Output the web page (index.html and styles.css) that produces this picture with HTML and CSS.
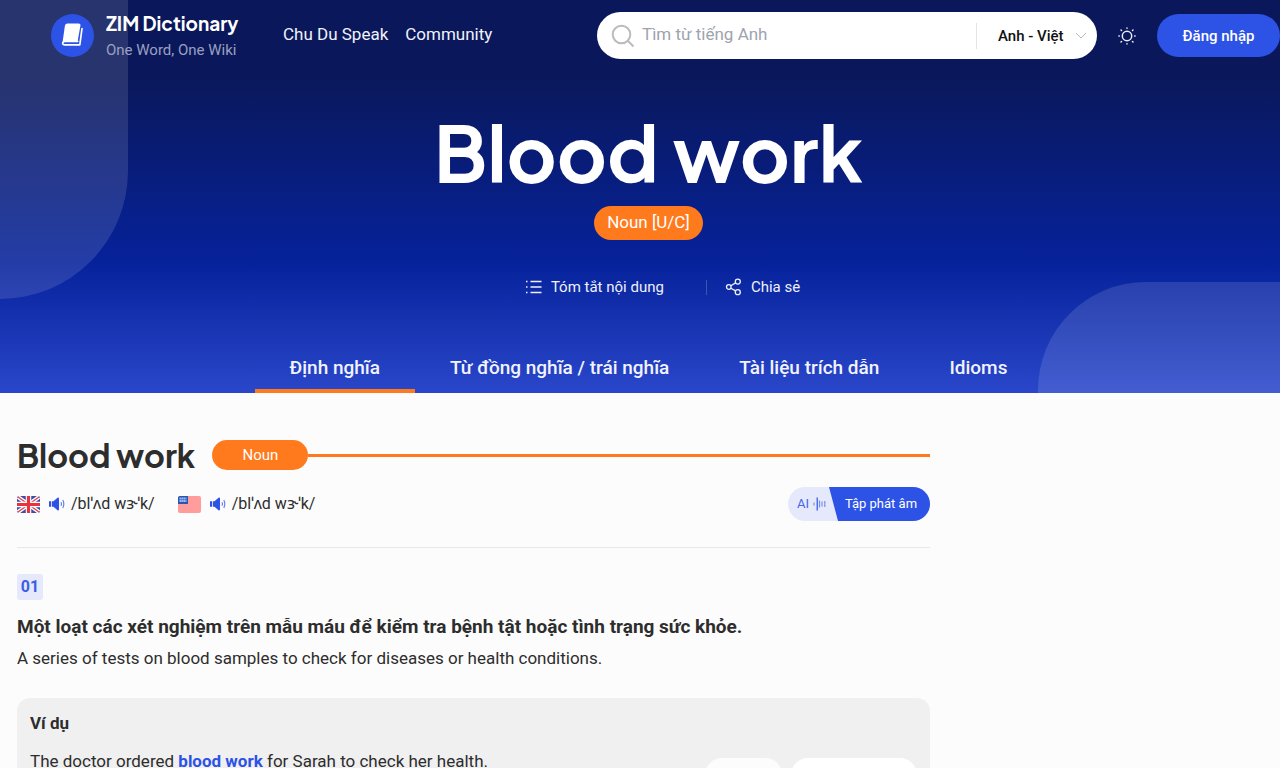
FILE: index.html
```html
<!DOCTYPE html>
<html lang="vi">
<head>
<meta charset="utf-8">
<meta name="viewport" content="width=device-width, initial-scale=1">
<title>Blood work - ZIM Dictionary</title>
<link rel="stylesheet" href="styles.css">
</head>
<body>
<div class="hero">
  <div class="blob blob-left"></div>
  <div class="blob blob-right"></div>
  <header class="topbar">
    <a class="brand" href="#">
      <svg class="brand-mark" viewBox="0 0 43 43" aria-hidden="true">
        <circle cx="21.5" cy="21.5" r="21.5" fill="#2d52e6"/>
        <path d="M16.500 9.500h11q2.300 0 1.900 2.300L26.700 27H14.500q-1.800 0-2.900 1l2.300-16.200q.4-2.300 2.600-2.300z" fill="#fff"/>
        <path d="M31 14.500l-2.200 16.300H14q-2.500 0-2.300-1.800.2-1.700 2.800-1.700h12.200" fill="none" stroke="#fff" stroke-width="1.700" stroke-linecap="round" stroke-linejoin="round"/>
      </svg>
      <span class="brand-text"><span class="brand-name">ZIM Dictionary</span><span class="brand-tag">One Word, One Wiki</span></span>
    </a>
    <nav class="nav"><a href="#">Chu Du Speak</a><a href="#">Community</a></nav>
    <form class="search">
      <svg class="search-icon" viewBox="0 0 24 24" aria-hidden="true"><circle cx="10.500" cy="10.500" r="8.800"/><path d="M17 17l5.500 5.500"/></svg>
      <input class="search-input" type="text" placeholder="Tìm từ tiếng Anh" aria-label="Tìm từ tiếng Anh">
      <span class="lang">
        <select class="lang-select" aria-label="Ngôn ngữ"><option>Anh - Việt</option></select>
        <svg class="chevron" viewBox="0 0 12 8" aria-hidden="true"><path d="M1 1l5 5 5-5"/></svg>
      </span>
    </form>
    <button class="theme" type="button" aria-label="Giao diện">
      <svg viewBox="0 0 18 18" aria-hidden="true"><circle cx="9" cy="9" r="4.700"/><path d="M9 .9v.4M9 16.700v.4M.9 9h.4M16.700 9h.4M3 3l.5.5M14.500 14.500l.5.500M3 15l.5-.5M14.500 3.500l.5-.5"/></svg>
    </button>
    <button class="login" type="button">Đăng nhập</button>
  </header>
  <div class="hero-body">
    <h1 class="hero-title">Blood work</h1>
    <span class="hero-pos">Noun [U/C]</span>
    <div class="actions">
      <button class="action" type="button">
        <svg viewBox="0 0 18 18" aria-hidden="true"><path d="M5.500 3.500h11M5.500 9h11M5.500 14.500h11M1 3.500h1.500M1 9h1.500M1 14.500h1.500"/></svg>Tóm tắt nội dung</button>
      <span class="divider"></span>
      <button class="action" type="button">
        <svg viewBox="0 0 18 18" aria-hidden="true"><circle cx="3.800" cy="9" r="2.300"/><circle cx="12.800" cy="3.600" r="2.500"/><circle cx="12.800" cy="14.200" r="2.500"/><path d="M5.800 7.800l4.800-2.900M5.800 10.200l4.900 2.700"/></svg>Chia sẻ</button>
    </div>
    <nav class="tabs">
      <a class="tab tab-active" href="#">Định nghĩa</a>
      <a class="tab" href="#">Từ đồng nghĩa / trái nghĩa</a>
      <a class="tab" href="#">Tài liệu trích dẫn</a>
      <a class="tab" href="#">Idioms</a>
    </nav>
  </div>
</div>
<div class="page">
  <main class="entry">
    <div class="entry-head">
      <h2 class="entry-title">Blood work</h2>
      <span class="entry-pos">Noun</span>
      <span class="entry-rule"></span>
    </div>
    <div class="sound-row">
      <div class="sound">
        <svg class="flag" viewBox="0 0 23 17" role="img" aria-label="UK">
          <rect width="23" height="17" rx="2" fill="#3c4fa5"/>
          <path d="M1 1l21 15M22 1L1 16" stroke="#fff" stroke-width="4"/>
          <path d="M1 1l21 15M22 1L1 16" stroke="#e5444f" stroke-width="1.400"/>
          <path d="M11.500 0v17M0 8.500h23" stroke="#fff" stroke-width="5.500"/>
          <path d="M11.500 0v17M0 8.500h23" stroke="#e5343f" stroke-width="3.200"/>
        </svg>
        <button class="speaker" type="button" aria-label="Nghe UK"><svg viewBox="0 0 16 14" aria-hidden="true"><path d="M0 4.200h2v5.600H0zM2.800 4.200h1.700L8.500.8Q10 0 10 2v10q0 2-1.500 1.200L4.500 9.800H2.800z" fill="#2d52e6"/><path d="M12 5.200q.9 1.800 0 3.600M13.800 3q2 4 0 8" fill="none" stroke="#6881ed" stroke-width="1.200"/></svg></button>
        <span class="ipa">/blˈʌd wɝˈk/</span>
      </div>
      <div class="sound">
        <svg class="flag" viewBox="0 0 23 17" role="img" aria-label="US">
          <rect width="23" height="17" rx="2" fill="#ff9c9c"/>
          <path d="M2 0h8v8H0V2q0-2 2-2z" fill="#2856b4"/>
          <path d="M1.500 2.500h7M1.500 5h7" stroke="#9db9ee" stroke-width="1.800" stroke-dasharray="1.700 .3"/>
        </svg>
        <button class="speaker" type="button" aria-label="Nghe US"><svg viewBox="0 0 16 14" aria-hidden="true"><path d="M0 4.200h2v5.600H0zM2.800 4.200h1.700L8.500.8Q10 0 10 2v10q0 2-1.500 1.200L4.500 9.800H2.800z" fill="#2d52e6"/><path d="M12 5.200q.9 1.800 0 3.600M13.800 3q2 4 0 8" fill="none" stroke="#6881ed" stroke-width="1.200"/></svg></button>
        <span class="ipa">/blˈʌd wɝˈk/</span>
      </div>
      <button class="practice" type="button">
        <span class="practice-ai">AI <svg viewBox="0 0 13 14" aria-hidden="true"><path d="M1 5.500v3M6.500 3.500v7M9 4.500v5M11.800 4v6" stroke-opacity=".6"/><path d="M4.200 .5v13"/></svg></span>
        <span class="practice-label">Tập phát âm</span>
      </button>
    </div>
    <section class="meaning">
      <span class="index">01</span>
      <h3 class="meaning-vi">Một loạt các xét nghiệm trên mẫu máu để kiểm tra bệnh tật hoặc tình trạng sức khỏe.</h3>
      <p class="meaning-en">A series of tests on blood samples to check for diseases or health conditions.</p>
      <div class="example">
        <h4 class="example-title">Ví dụ</h4>
        <div class="example-row">
          <p class="example-text">The doctor ordered <a href="#">blood work</a> for Sarah to check her health.</p>
          <button class="chip chip-small" type="button" aria-label="Nghe"></button>
          <button class="chip chip-large" type="button" aria-label="Luyện tập"></button>
        </div>
      </div>
    </section>
  </main>
  <aside class="side"></aside>
</div>
</body>
</html>
```
FILE: styles.css
```css
* { box-sizing: border-box; }
body {
  margin: 0;
  background: #fcfcfc;
  color: #2d2d2d;
  font-family: Roboto, "Noto Sans", "DejaVu Sans", sans-serif;
  font-size: 16px;
  overflow-x: hidden;
}
h1, h2, h3, h4, p { margin: 0; }
a { color: inherit; text-decoration: none; }
button {
  margin: 0;
  padding: 0;
  border: 0;
  background: none;
  color: inherit;
  font-family: inherit;
  cursor: pointer;
}

.hero {
  position: relative;
  overflow: hidden;
  color: #fff;
  background: linear-gradient(#0a185b 0, #0a185b 20%, #06229b 67%, #2a47cb 100%);
}
.blob { position: absolute; background: rgba(255, 255, 255, .12); }
.blob-left { left: 0; top: 0; width: 10%; height: 299px; border-bottom-right-radius: 128px; }
.blob-right { right: 0; bottom: 0; width: 242px; height: 111px; border-top-left-radius: 108px; }

.topbar {
  position: relative;
  display: flex;
  align-items: center;
  height: 71px;
  padding-left: 51px;
}
.brand { display: flex; align-items: center; gap: 12px; width: 232px; }
.brand-mark { width: 43px; height: 43px; }
.brand-text { display: flex; flex-direction: column; gap: 5px; padding-bottom: 1px; }
.brand-name { font: 700 19px/24px "Plus Jakarta Sans", Lato, sans-serif; }
.brand-tag { font-size: 15px; line-height: 20px; color: #9aa0c0; }
.nav { display: flex; gap: 17px; flex: 1; padding-bottom: 3px; font-size: 17px; line-height: 24px; color: #f0f2fa; white-space: nowrap; }

.search {
  display: flex;
  align-items: center;
  width: 500px;
  height: 47px;
  padding-left: 14px;
  border-radius: 24px;
  background: #fff;
}
.search-icon { width: 24px; height: 24px; fill: none; stroke: #bbb; stroke-width: 2; }
.search-input {
  flex: 1;
  min-width: 0;
  padding: 0 7px 3px;
  border: 0;
  outline: 0;
  background: none;
  font-family: inherit;
  font-size: 17px;
}
.search-input::placeholder { color: #9ea3ae; opacity: 1; }
.lang {
  display: flex;
  align-items: center;
  gap: 11px;
  width: 121px;
  height: 26px;
  padding-left: 21px;
  border-left: 1px solid #e4e4e4;
}
.lang-select {
  appearance: none;
  padding: 0;
  border: 0;
  background: none;
  color: #111;
  font-family: inherit;
  font-size: 15px;
  font-weight: 500;
}
.chevron { flex: none; width: 12px; height: 8px; fill: none; stroke: #bbb; stroke-width: 1; }
.theme { width: 18px; height: 18px; margin: 0 21px; }
.theme svg { display: block; fill: none; stroke: #e8ebf8; stroke-width: 1.5; stroke-linecap: round; }
.login {
  width: 123px;
  height: 43px;
  border-radius: 22px;
  background: #2d52e6;
  font-size: 15px;
  font-weight: 500;
}

.hero-body {
  position: relative;
  display: flex;
  flex-direction: column;
  align-items: center;
  padding: 35px 0 0 17px;
}
.hero-title { padding-bottom: 8px; font: 700 77px/92px "Plus Jakarta Sans", Lato, sans-serif; }
.hero-pos {
  padding: 0 13px 1px;
  border-radius: 17px;
  background: #ff7a1c;
  font-size: 17px;
  line-height: 33px;
}
.actions { display: flex; align-items: center; gap: 18px; margin: 35px 0 0 28px; }
.action { display: flex; align-items: center; gap: 8px; font-size: 15px; line-height: 24px; color: #eef1fc; }
.action svg { width: 18px; height: 18px; fill: none; stroke: currentColor; stroke-width: 1.3; }
.divider { width: 1px; height: 15px; margin-left: 24px; background: rgba(255, 255, 255, .2); }
.tabs { display: flex; margin-top: 48px; }
.tab {
  padding: 0 35px;
  border-bottom: 4px solid transparent;
  font-size: 19px;
  font-weight: 500;
  line-height: 42px;
  color: #f1f3fd;
}
.tab-active { border-color: #ff7a1c; }

.page { display: flex; padding-left: 17px; }
.entry { flex: 913; min-width: 0; padding-top: 42px; }
.side { flex: 350; }
.entry-head { display: flex; align-items: center; }
.entry-title { font: 700 32px/40px "Plus Jakarta Sans", Lato, sans-serif; }
.entry-pos {
  width: 96px;
  margin-left: 17px;
  border-radius: 15px;
  background: #ff7a1c;
  color: #fff;
  font-size: 15px;
  line-height: 30px;
  text-align: center;
}
.entry-rule { flex: 1; height: 3px; background: #ff7a1c; }
.sound-row {
  display: flex;
  align-items: center;
  gap: 23px;
  padding: 12px 0 26px;
  border-bottom: 1px solid #e8e8e8;
}
.sound { display: flex; align-items: center; }
.flag { width: 23px; height: 17px; margin-right: 9px; }
.speaker { width: 16px; height: 14px; margin-right: 6px; }
.speaker svg { display: block; }
.ipa { font-size: 16px; line-height: 24px; }
.practice {
  display: flex;
  width: 142px;
  height: 34px;
  margin-left: auto;
  overflow: hidden;
  border-radius: 17px;
  background: #e6e9fb;
  font-size: 13px;
  line-height: 34px;
}
.practice-ai { display: flex; align-items: center; gap: 4px; width: 41px; padding-left: 9px; color: #4565e6; }
.practice-ai svg { flex: none; width: 13px; height: 14px; fill: none; stroke: #2d52e6; stroke-width: 1.2; }
.practice-label {
  flex: 1;
  padding-left: 3px;
  background: #2d52e6;
  color: #fff;
  clip-path: polygon(0 0, 100% 0, 100% 100%, 9px 100%);
}

.meaning { padding-top: 26px; }
.index {
  display: inline-block;
  width: 26px;
  border-radius: 3px;
  background: #e6e9fb;
  color: #3b5ee8;
  font-weight: 700;
  line-height: 26px;
  text-align: center;
}
.meaning-vi { margin-top: 12px; font-size: 19px; line-height: 30px; }
.meaning-en { margin-top: 3px; font-size: 17px; line-height: 26px; }
.example {
  margin-top: 27px;
  padding: 12px 13px 26px;
  border-radius: 13px;
  background: #f0f0f0;
}
.example-title { font-size: 17px; line-height: 26px; }
.example-row { display: flex; align-items: flex-start; gap: 9px; margin-top: 12px; }
.example-text { flex: 1; font-size: 17px; line-height: 26px; }
.example-text a { color: #2d52e6; font-weight: 700; }
.chip { height: 34px; margin-top: 10px; border-radius: 17px; background: #fff; }
.chip-small { width: 77px; background: #fcfcfc; }
.chip-large { width: 126px; }
```
